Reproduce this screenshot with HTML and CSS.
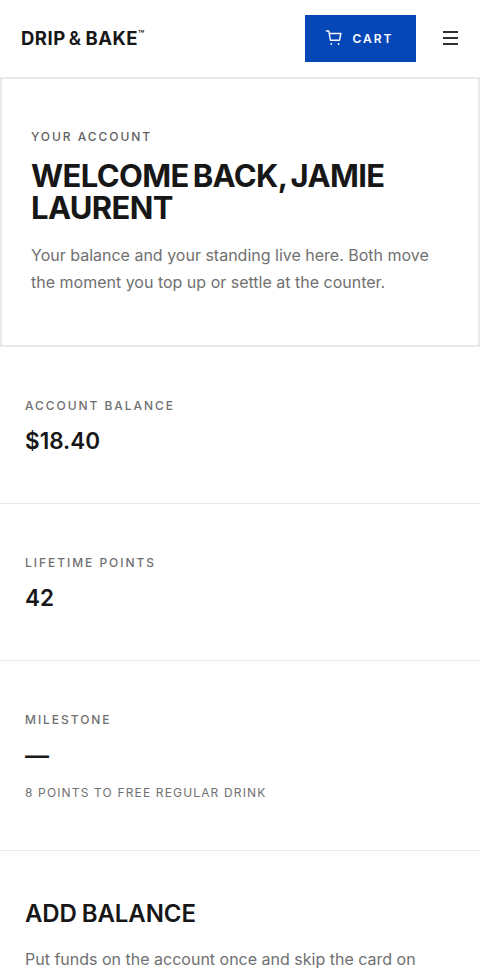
FILE: index.html
```html
<!DOCTYPE html>
<html lang="en">
<head>
<meta charset="utf-8">
<title>Drip &amp; Bake — Your Account</title>
<link rel="stylesheet" href="styles.css">
</head>
<body>
<header class="topbar">
  <a class="logo">DRIP<span class="amp">&amp;</span>BAKE<sup class="tm">™</sup></a>
  <div class="actions">
    <a class="cart">
      <svg class="cart-icon" viewBox="0 0 18 18" width="18" height="18" fill="none" stroke="currentColor" stroke-width="1.4" stroke-linecap="round" stroke-linejoin="round"><path d="M1.5 2h2.3l1.6 9.2h9.1l1.4-6.7H4.3"/><circle cx="6.3" cy="15" r=".9" fill="currentColor" stroke="none"/><circle cx="13.6" cy="15" r=".9" fill="currentColor" stroke="none"/></svg>
      <span>CART</span>
    </a>
    <button class="menu" aria-label="Menu"><i></i><i></i><i></i></button>
  </div>
</header>
<main>
  <section class="hero">
    <p class="eyebrow">YOUR ACCOUNT</p>
    <h1>WELCOME BACK, JAMIE LAURENT</h1>
    <p class="lede">Your balance and your standing live here. Both move the moment you top up or settle at the counter.</p>
  </section>
  <section class="stat">
    <p class="label">ACCOUNT BALANCE</p>
    <p class="value">$18.40</p>
  </section>
  <section class="stat">
    <p class="label">LIFETIME POINTS</p>
    <p class="value">42</p>
  </section>
  <section class="stat milestone">
    <p class="label">MILESTONE</p>
    <p class="value dash">—</p>
    <p class="label note">8 POINTS TO FREE REGULAR DRINK</p>
  </section>
  <section class="add">
    <h2>ADD BALANCE</h2>
    <p class="lede">Put funds on the account once and skip the card on every visit.</p>
  </section>
</main>
</body>
</html>
```
FILE: styles.css
```css
* { box-sizing: border-box; }
html, body { margin: 0; padding: 0; }
body { background: #fff; color: #171717; font-family: Inter, "Liberation Sans", sans-serif; }
p, h1, h2 { margin: 0; }
.topbar { height: 77px; display: flex; align-items: center; justify-content: space-between; padding: 0 22px 1px 21px; }
.logo { font-size: 18.5px; font-weight: 700; letter-spacing: 0.5px; color: #171717; display: flex; align-items: flex-start; line-height: 20px; }
.amp { margin: 0 4px 0 3px; font-weight: 600; }
.tm { font-size: 10px; line-height: 10px; font-weight: 600; letter-spacing: 0; margin-top: 1px; }
.actions { display: flex; align-items: center; gap: 27px; }
.cart { width: 111px; height: 47px; background: #0647b8; color: #fff; display: flex; align-items: center; justify-content: center; gap: 9px; padding-right: 2px; font-size: 12px; font-weight: 600; letter-spacing: 2px; }
.cart-icon { flex: none; }
.menu { width: 15px; height: 14px; padding: 0; background: none; border: 0; display: flex; flex-direction: column; justify-content: space-between; }
.menu i { display: block; height: 1.6px; background: #303030; width: 100%; }
.hero { height: 270px; border: 2px solid #e9e9e9; padding: 50px 29px 0; }
.eyebrow { font-size: 12px; line-height: 16px; font-weight: 500; letter-spacing: 1.95px; color: #5f5f5f; }
h1 { margin-top: 15px; font-size: 31px; line-height: 32px; font-weight: 700; letter-spacing: -0.65px; word-spacing: -2.6px; color: #171717; }
.lede { font-size: 16px; line-height: 27px; color: #707070; }
.hero .lede { margin-top: 18px; }
.stat { border-bottom: 1px solid #e9e9e9; padding: 51px 25px 0; height: 157px; }
.milestone { height: 190px; }
.label { font-size: 12px; line-height: 16px; font-weight: 500; letter-spacing: 1.95px; color: #707070; }
.value { margin-top: 11px; font-size: 22.5px; line-height: 32px; font-weight: 600; color: #171717; }
.dash { margin-top: 12px; font-size: 24px; }
.note { margin-top: 13px; letter-spacing: 1.15px; font-weight: 400; }
.add { padding: 47px 25px 0; }
h2 { font-size: 24px; line-height: 32px; font-weight: 600; letter-spacing: -0.1px; word-spacing: -1px; color: #171717; }
.add .lede { margin-top: 16px; }
```
